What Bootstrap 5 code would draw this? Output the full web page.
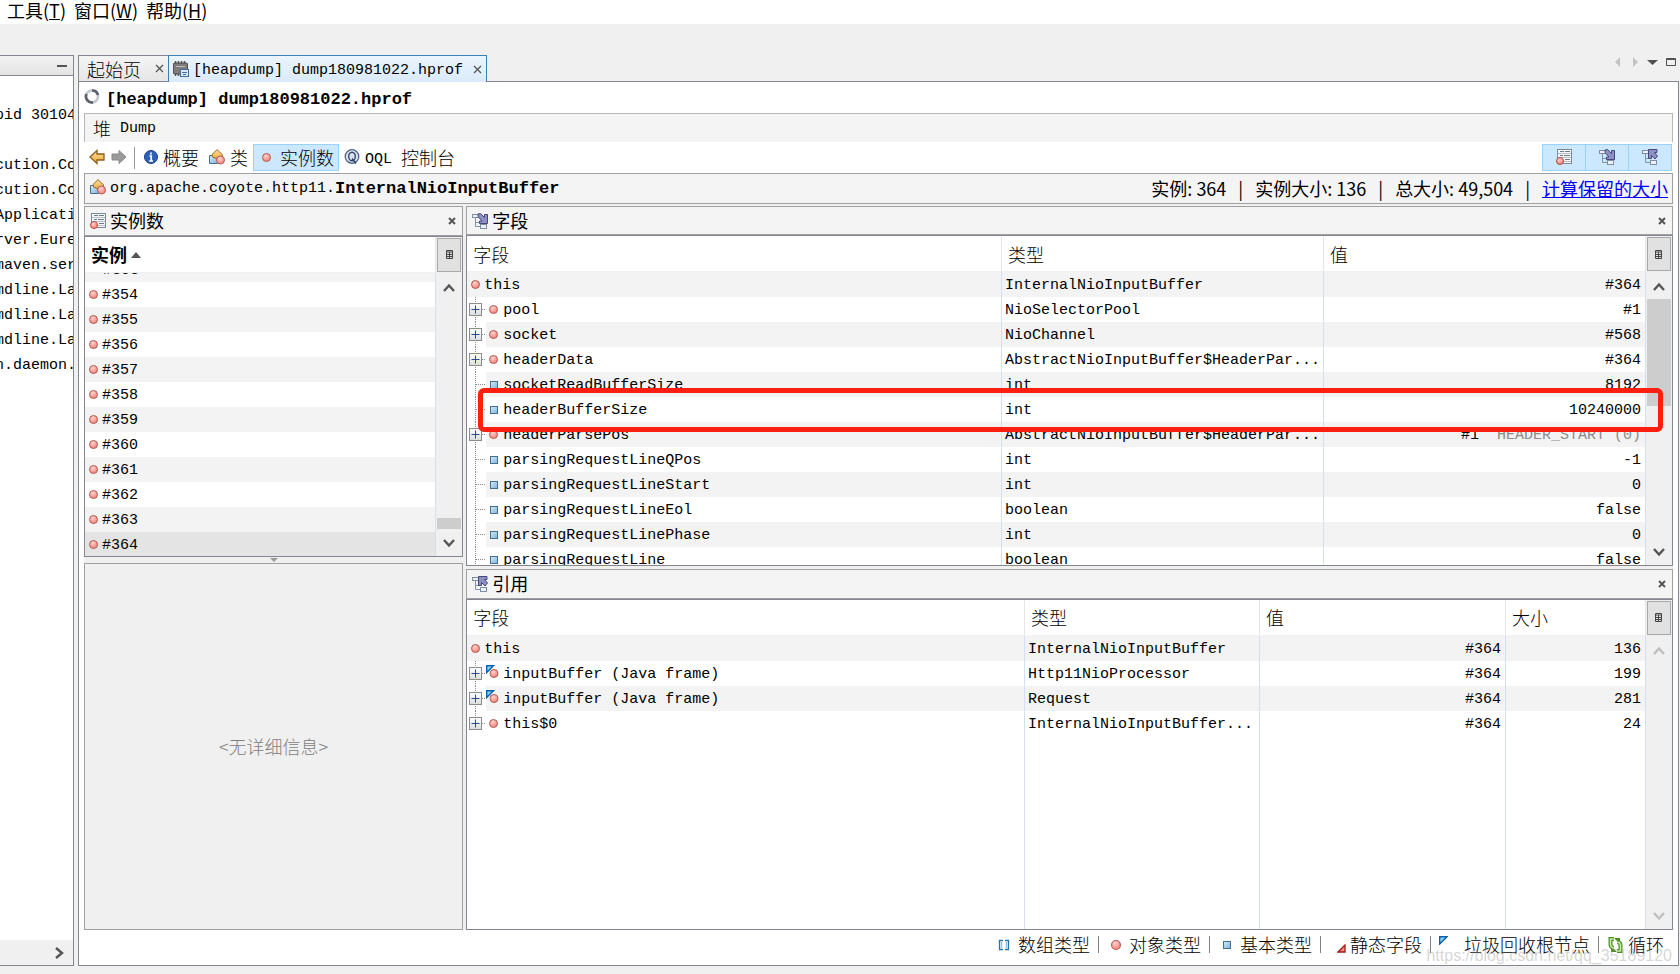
<!DOCTYPE html>
<html lang="zh-CN">
<head>
<meta charset="utf-8">
<meta name="viewport" content="width=device-width, initial-scale=1">
<title>VisualVM - dump180981022.hprof</title>
<link href="https://cdn.jsdelivr.net/npm/bootstrap@5.3.0/dist/css/bootstrap.min.css" rel="stylesheet">
<style>
:root { --line: #828790; --soft: #a0a0a0; --face: #f0f0f0; --stripe: #f3f3f3; --grid: #d5dff2; }
body { background: var(--face); color: #000; font: 15px/25px "Liberation Mono", "Noto Sans CJK SC", monospace; overflow: hidden; }
button { background: none; border: 0; padding: 0; color: inherit; font: inherit; line-height: 1; }
svg { display: block; flex: none; }
.ui { font-family: "Noto Sans CJK SC", sans-serif; font-size: 18px; }
.zh { font-family: "Noto Sans CJK SC", sans-serif; font-size: 18px; font-weight: 300; }
.menubar { height: 24px; gap: 8px; padding: 0 7px 4px; }
.menubar button { line-height: 20px; }
.workspace { padding: 31px 1px 8px 0; gap: 4px; }
.sidebar { width: 74px; border: 1px solid var(--line); border-left: 0; }
.sidebar-head { height: 20px; border-bottom: 1px solid var(--line); padding-right: 6px; background: linear-gradient(#f2f2f2, #e4e4e4); }
.sidebar-list { padding-top: 27px; margin-left: -5px; }
.sidebar-scroll { height: 25px; padding-right: 9px; background: var(--face); }
.tabs { height: 26px; }
.tab-item { border: 1px solid var(--line); border-width: 1px 0 0 1px; height: 26px; padding-left: 8px; background: linear-gradient(#f4f4f4, #e6e6e6); }
.tab-item.first { width: 90px; }
.tab-item.on { height: 27px; width: 319px; padding-left: 4px; border: 1px solid #3c7fb1; border-bottom: 0; background: linear-gradient(#ecf4fc, #d9eafc); position: relative; z-index: 1; }
.tab-close { margin-left: auto; padding-right: 4px; }
.tab-text { padding-top: 3px; }
.tab-tools { padding: 2px 3px 0 0; }
.doc { border: 1px solid var(--line); padding: 0 5px; }
.doc-title { height: 31px; padding-top: 6px; gap: 6px; }
.strong-mono { font-size: 17px; font-weight: 700; }
.crumb { height: 29px; border: 1px solid #b9b9b9; border-bottom: 0; background: #f4f4f4; padding: 0 8px; gap: 9px; }
.tools { height: 31px; padding: 0 1px 0 4px; }
.tools button { display: flex; align-items: center; height: 27px; border: 1px solid transparent; gap: 5px; padding-bottom: 1px; }
.tools .sep { width: 1px; height: 22px; margin: 0 4px 0 6px; background: #9a9a9a; }
.tools .lit { background: #cce8ff; border-color: #99d1ff; }
.view-btn { width: 44px; justify-content: center; }
.view-btn + .view-btn { margin-left: -1px; }
.info { height: 31px; border: 1px solid var(--soft); background: #f4f4f4; padding: 0 4px 0 5px; }
.info a { color: #00f; }
.info .ui { gap: 12px; }
.panes { background: var(--face); padding-top: 2px; gap: 3px; }
.pane-left { flex: 379 1 0; min-width: 0; }
.pane-right { flex: 1206 1 0; min-width: 0; gap: 3px; }
.box-top { flex: 352 1 0; min-height: 0; }
.box-detail { flex: 366 1 0; min-height: 0; border: 1px solid var(--soft); color: #808080; }
.box-fields { flex: 359 1 0; min-height: 0; }
.box-refs { flex: 361 1 0; min-height: 0; }
.splitter { height: 6px; }
.box-head { height: 30px; border: 1px solid var(--soft); background: #f4f4f4; padding: 0 6px 0 5px; gap: 4px; }
.box-body { border: 1px solid var(--line); background: #fff; min-height: 0; }
.data-table { table-layout: fixed; width: 100%; border-collapse: separate; border-spacing: 0; }
.data-table th { height: 36px; padding: 1px 0 0 6px; border-right: 1px solid #e5e5e5; border-bottom: 1px solid var(--face); font-weight: inherit; }
.data-table td { height: 25px; padding: 2px 0 0 3px; border-right: 1px solid var(--grid); white-space: nowrap; overflow: hidden; line-height: 23px; }
.data-table tr.g td { background: var(--stripe); }
.data-table tr.sel td { background: #e4e4e4; }
.data-table td:first-child { padding: 0; }
.data-table tr.rest td { height: auto; }
.data-table td.num { text-align: right; padding-right: 4px; }
.node { display: flex; align-items: center; height: 25px; padding: 2px 0 0 4px; gap: 4px; line-height: 25px; }
.node svg { margin-bottom: 2px; }
.node.cut { height: 9px; align-items: flex-end; overflow: hidden; padding: 0 0 0 18px; line-height: 23px; }
.kid { padding-left: 0; gap: 0; }
.kid svg:first-child { background: #fff; }
.kid svg + svg { margin-right: 1px; }
.gut { width: 19px; height: 25px; }
.scroller { width: 26px; background: var(--face); }
.cols-btn { height: 34px; margin: 1px 1px 1px 1px; border: 1px solid #a9a9a9; background: #e1e1e1; display: flex; align-items: center; justify-content: center; }
.step { height: 27px; display: flex; align-items: center; justify-content: center; padding-top: 3px; }
.step.dn { padding: 1px 0 0; }
.thumb { background: #cdcdcd; margin: 0 1px; }
.marker { position: absolute; top: 182px; left: 12px; right: 10px; height: 44px; border: 5px solid #ff1f10; border-radius: 6px; pointer-events: none; }
.legend { height: 35px; padding: 0 9px 6px; }
.legend i { width: 1px; height: 17px; background: #808080; }
.legend-item { display: flex; align-items: center; }
.watermark { position: absolute; right: 8px; bottom: 6px; font: 16px/25px "Liberation Sans", sans-serif; color: rgba(150, 150, 150, .4); }
</style>
</head>
<body class="vh-100 d-flex flex-column">

<svg width="0" height="0" class="position-absolute" aria-hidden="true">
  <defs>
    <radialGradient id="rg" cx=".4" cy=".3" r=".8"><stop offset="0" stop-color="#ffd2cc"/><stop offset="1" stop-color="#f0776c"/></radialGradient>
    <linearGradient id="bg" x2="1" y2="1"><stop offset="0" stop-color="#d4ecfa"/><stop offset="1" stop-color="#7fb3dc"/></linearGradient>
    <linearGradient id="og" x2="0" y2="1"><stop offset="0" stop-color="#fde3a0"/><stop offset="1" stop-color="#eea436"/></linearGradient>
    <linearGradient id="pg" x2="0" y2="1"><stop offset="0" stop-color="#fff"/><stop offset="1" stop-color="#dcdcdc"/></linearGradient>
  </defs>
  <symbol id="ball" viewBox="0.5 0.5 9 9"><circle cx="5" cy="5" r="4" fill="url(#rg)" stroke="#b05c55"/></symbol>
  <symbol id="prim" viewBox="0 0 10 10"><rect x="1.5" y="1.5" width="7" height="7" fill="url(#bg)" stroke="#44708f"/></symbol>
  <symbol id="plus" viewBox="0 0 19 25"><path d="M8.500 0V25M15 12.500H19" stroke="#888" stroke-dasharray="1 1"/><rect x="2.500" y="6.500" width="12" height="12" fill="url(#pg)" stroke="#8c8c8c"/><path d="M4.500 12.500H12.500M8.500 8.500V16.500" stroke="#2d4a94"/></symbol>
  <symbol id="plusend" viewBox="0 0 19 25"><path d="M8.500 0V7M15 12.500H19" stroke="#888" stroke-dasharray="1 1"/><rect x="2.500" y="6.500" width="12" height="12" fill="url(#pg)" stroke="#8c8c8c"/><path d="M4.500 12.500H12.500M8.500 8.500V16.500" stroke="#2d4a94"/></symbol>
  <symbol id="leaf" viewBox="0 0 19 25"><path d="M8.500 0V25M9 12.500H19" stroke="#888" stroke-dasharray="1 1"/></symbol>
  <symbol id="root" viewBox="0 0 9 9"><path d="M.7.7H8L.7 8Z" fill="#8fd0f5" stroke="#0a62ad" stroke-width="1.400"/></symbol>
  <symbol id="rootball" viewBox="0 0 16 25"><path d="M.7 4.700H7.500L.7 11.500Z" fill="#8fd0f5" stroke="#0a62ad" stroke-width="1.400"/><circle cx="8" cy="12.500" r="4" fill="url(#rg)" stroke="#b05c55"/></symbol>
  <symbol id="cls" viewBox="0 0 16 16"><path d="M.5 6.500H8.500V14.500H.5Z" fill="url(#bg)" stroke="#44708f"/><path d="M8 .7 13.800 6 10 10.500 3.500 8 3 5.500Z" fill="url(#og)" stroke="#9a6a22"/><circle cx="11.500" cy="11" r="4" fill="url(#rg)" stroke="#b05c55"/></symbol>
  <symbol id="inst" viewBox="0 0 16 16"><rect x="1.500" y=".5" width="14" height="14" fill="#f5f7f9" stroke="#7b8a99"/><path d="M2 4.500H15M2 8.500H15M2 12.500H15" stroke="#b4bfc9"/><path d="M4 2.500H8M9 2.500H14M4 6.500H7M8 6.500H14M9 10.500H14" stroke="#6e7b88"/><circle cx="4" cy="12" r="3.500" fill="url(#rg)" stroke="#b3483f"/></symbol>
  <symbol id="fld" viewBox="0 0 16 16"><path d="M3.500 5V13.500H8M3.500 9.500H8" fill="none" stroke="#8392a5"/><rect x=".5" y="1.500" width="7" height="3" fill="#eef2f6" stroke="#7d8da2"/><rect x="8.500" y="11.500" width="6" height="4" fill="#eef2f6" stroke="#7d8da2"/><rect x="8.500" y="8.500" width="6" height="3" fill="#dfe5ec" stroke="#7d8da2"/><path d="M6 1 8.500.5 12.500 4.500V1.500H15.500V10.500H7.500V8H10L6 3.500Z" fill="#8d90c0" stroke="#45487f"/></symbol>
  <symbol id="ref" viewBox="0 0 16 16"><path d="M3.500 5V13.500H8M3.500 9.500H8" fill="none" stroke="#8392a5"/><rect x=".5" y="1.500" width="7" height="3" fill="#eef2f6" stroke="#7d8da2"/><rect x="8.500" y="11.500" width="6" height="4" fill="#eef2f6" stroke="#7d8da2"/><path d="M6.500.5H15V3.500H12.500L15.500 7 13 10 9.500 6.500V9.500H6.500Z" fill="#8d90c0" stroke="#45487f"/></symbol>
  <symbol id="grid" viewBox="0 0 7 9"><path d="M.5 .5H6.500V8.500H.5ZM.5 2H6.500M.5 4.500H6.500M.5 6.500H6.500M3.500 2V8.500" fill="none" stroke="#444"/></symbol>
  <symbol id="up" viewBox="0 0 12 10"><path d="M1 8 6 2.500 11 8" fill="none" stroke="currentColor" stroke-width="2.400"/></symbol>
  <symbol id="down" viewBox="0 0 12 10"><path d="M1 2 6 7.500 11 2" fill="none" stroke="currentColor" stroke-width="2.400"/></symbol>
  <symbol id="x" viewBox="0 0 9 9"><path d="M1 1 8 8M8 1 1 8" stroke="#555" stroke-width="1.300"/></symbol>
  <symbol id="xb" viewBox="0 0 8 8"><path d="M1 1 7 7M7 1 1 7" stroke="#555" stroke-width="2"/></symbol>
</svg>

<nav class="menubar ui bg-white d-flex align-items-center" aria-label="菜单">
  <button type="button">工具(<u>T</u>)</button>
  <button type="button">窗口(<u>W</u>)</button>
  <button type="button">帮助(<u>H</u>)</button>
</nav>

<div class="workspace d-flex flex-grow-1">
  <aside class="sidebar bg-white d-flex flex-column flex-shrink-0 overflow-hidden">
    <div class="sidebar-head d-flex align-items-center justify-content-end"><button type="button" aria-label="最小化"><svg width="10" height="2"><rect width="10" height="2" fill="#555"/></svg></button></div>
    <div class="sidebar-list flex-grow-1 text-nowrap">
      <div>pid 30104</div><div>&nbsp;</div>
      <div>cution.Co</div><div>cution.Co</div><div>Applicati</div><div>rver.Eure</div><div>maven.ser</div><div>mdline.La</div><div>mdline.La</div><div>mdline.La</div><div>n.daemon.</div>
    </div>
    <div class="sidebar-scroll d-flex align-items-center justify-content-end"><button type="button" aria-label="向右滚动"><svg width="10" height="12"><path d="M2 1 8 6 2 11" fill="none" stroke="#555" stroke-width="2.400"/></svg></button></div>
  </aside>

  <main class="d-flex flex-column flex-grow-1" style="min-width:0">
    <div class="tabs d-flex">
      <div class="tab-item first d-flex align-items-center"><button type="button" class="zh">起始页</button><button type="button" class="tab-close" aria-label="关闭"><svg width="9" height="9"><use href="#x"/></svg></button></div>
      <div class="tab-item on d-flex align-items-center">
        <svg width="16" height="16" class="me-1" viewBox="0 0 16 16"><rect x=".5" y="2" width="14" height="11" rx="1" fill="#7d7d7d" stroke="#555"/><path d="M2.500 0V3M5.500 0V3M8.500 0V3M11.500 0V3M2.500 12V15M5.500 12V15" stroke="#555" stroke-width="1.500"/><path d="M3 5.500H12" stroke="#bbb"/><rect x="7.500" y="8.500" width="8" height="7" fill="#dbe8f7" stroke="#3e6da8"/><path d="M9 11.500H14M10 13.500H13" stroke="#3e6da8"/></svg>
        <button type="button" class="tab-text text-nowrap">[heapdump] dump180981022.hprof</button><button type="button" class="tab-close" aria-label="关闭"><svg width="9" height="9"><use href="#x"/></svg></button>
      </div>
      <div class="tab-tools d-flex ms-auto align-items-start">
        <svg width="62" height="12" viewBox="0 0 62 12" aria-hidden="true"><path d="M6 0V10L1 5ZM19 0V10L24 5Z" fill="#c3c3c3"/><path d="M33 3H44L38.500 8Z" fill="#505050"/><path d="M52.500 1.500H61.500V8.500H52.500ZM52 2.500H62" fill="none" stroke="#505050"/></svg>
      </div>
    </div>

    <section class="doc bg-white flex-grow-1 d-flex flex-column">
      <div class="doc-title d-flex align-items-center">
        <svg width="16" height="17" class="mb-2" viewBox="0 0 16 17"><circle cx="8" cy="8.500" r="6" fill="none" stroke="#c3c6cd" stroke-width="2.600"/><path d="M8 2.500A6 6 0 0 1 14 7" fill="none" stroke="#5a606d" stroke-width="2.600"/><path d="M2.500 6A6 6 0 0 0 9 14.400" fill="none" stroke="#5a606d" stroke-width="2.600"/></svg>
        <h1 class="strong-mono m-0 text-nowrap">[heapdump] dump180981022.hprof</h1>
      </div>
      <div class="crumb d-flex align-items-center"><span class="zh">堆</span><span>Dump</span></div>
      <div class="tools d-flex align-items-center">
        <button type="button" aria-label="后退"><svg width="16" height="16"><path d="M1 8 8 1.500V5H15V11H8V14.500Z" fill="url(#og)" stroke="#8f5f1c" stroke-width="1.300"/></svg></button>
        <button type="button" class="ms-1" aria-label="前进"><svg width="16" height="16"><path d="M15 8 8 1.500V5H1V11H8V14.500Z" fill="#9b9b9b" stroke="#8a8a8a"/></svg></button>
        <span class="sep"></span>
        <button type="button" class="ms-1 zh"><svg width="14" height="14" viewBox="0 0 14 14"><circle cx="7" cy="7" r="6.500" fill="#2f61b8" stroke="#1d3f86"/><path d="M7 2.500V4.500M5.500 6H7.200V11M5.200 11H9" fill="none" stroke="#fff" stroke-width="1.700"/></svg>概要</button>
        <button type="button" class="ms-2 me-1 zh"><svg width="16" height="16"><use href="#cls"/></svg>类</button>
        <button type="button" class="lit ps-2 pe-1 zh" aria-pressed="true"><svg width="9" height="9" class="me-1"><use href="#ball"/></svg>实例数</button>
        <button type="button" class="ms-1"><svg width="16" height="16" viewBox="0 0 16 16"><circle cx="8" cy="7.500" r="6.800" fill="#dbe3ef" stroke="#4f6488" stroke-width="1.300"/><ellipse cx="8" cy="7.500" rx="3.300" ry="4.200" fill="none" stroke="#33466c" stroke-width="1.400"/><path d="M8 9.500 12 14.500" stroke="#33466c" stroke-width="1.500"/></svg><span class="pt-1">OQL</span><span class="zh ms-1">控制台</span></button>
        <div class="d-flex ms-auto">
          <button type="button" class="lit view-btn" aria-label="实例数"><svg width="16" height="16"><use href="#inst"/></svg></button>
          <button type="button" class="lit view-btn" aria-label="字段"><svg width="16" height="16"><use href="#fld"/></svg></button>
          <button type="button" class="lit view-btn" aria-label="引用"><svg width="16" height="16"><use href="#ref"/></svg></button>
        </div>
      </div>
      <div class="info d-flex align-items-center text-nowrap">
        <svg width="16" height="16" class="me-1 mb-1"><use href="#cls"/></svg><span>org.apache.coyote.http11.</span><span class="strong-mono">InternalNioInputBuffer</span>
        <div class="ui d-flex ms-auto"><span>实例: 364</span><span>|</span><span>实例大小: 136</span><span>|</span><span>总大小: 49,504</span><span>|</span><a href="#">计算保留的大小</a></div>
      </div>

      <div class="panes d-flex flex-grow-1" style="min-height:0">
        <div class="pane-left d-flex flex-column">
          <section class="box-top d-flex flex-column">
            <div class="box-head d-flex align-items-center ui"><svg width="16" height="16"><use href="#inst"/></svg>实例数<button type="button" class="ms-auto" aria-label="关闭"><svg width="8" height="8"><use href="#xb"/></svg></button></div>
            <div class="box-body d-flex flex-grow-1">
              <div class="flex-grow-1 overflow-hidden">
                <table class="data-table">
                  <thead><tr><th scope="col"><div class="d-flex align-items-center zh fw-bold">实例<svg width="10" height="6" class="ms-1"><path d="M0 6 5 0 10 6Z" fill="#555"/></svg></div></th></tr></thead>
                  <tbody>
                    <tr class="g"><td style="height:9px"><div class="node cut">#353</div></td></tr>
                    <tr><td><div class="node"><svg width="9" height="9"><use href="#ball"/></svg>#354</div></td></tr>
                    <tr class="g"><td><div class="node"><svg width="9" height="9"><use href="#ball"/></svg>#355</div></td></tr>
                    <tr><td><div class="node"><svg width="9" height="9"><use href="#ball"/></svg>#356</div></td></tr>
                    <tr class="g"><td><div class="node"><svg width="9" height="9"><use href="#ball"/></svg>#357</div></td></tr>
                    <tr><td><div class="node"><svg width="9" height="9"><use href="#ball"/></svg>#358</div></td></tr>
                    <tr class="g"><td><div class="node"><svg width="9" height="9"><use href="#ball"/></svg>#359</div></td></tr>
                    <tr><td><div class="node"><svg width="9" height="9"><use href="#ball"/></svg>#360</div></td></tr>
                    <tr class="g"><td><div class="node"><svg width="9" height="9"><use href="#ball"/></svg>#361</div></td></tr>
                    <tr><td><div class="node"><svg width="9" height="9"><use href="#ball"/></svg>#362</div></td></tr>
                    <tr class="g"><td><div class="node"><svg width="9" height="9"><use href="#ball"/></svg>#363</div></td></tr>
                    <tr class="sel"><td><div class="node"><svg width="9" height="9"><use href="#ball"/></svg>#364</div></td></tr>
                  </tbody>
                </table>
              </div>
              <div class="scroller d-flex flex-column flex-shrink-0" style="color:#555">
                <button type="button" class="cols-btn" aria-label="列"><svg width="7" height="9"><use href="#grid"/></svg></button>
                <button type="button" class="step" aria-label="向上"><svg width="12" height="10"><use href="#up"/></svg></button>
                <div class="flex-grow-1 d-flex flex-column justify-content-end"><div class="thumb" style="height:11px"></div></div>
                <button type="button" class="step dn" aria-label="向下"><svg width="12" height="10"><use href="#down"/></svg></button>
              </div>
            </div>
          </section>
          <div class="splitter d-flex justify-content-center align-items-center"><svg width="8" height="4"><path d="M0 0H8L4 4Z" fill="#999"/></svg></div>
          <section class="box-detail d-flex align-items-center justify-content-center zh">&lt;无详细信息&gt;</section>
        </div>

        <div class="pane-right d-flex flex-column">
          <section class="box-fields d-flex flex-column position-relative">
            <div class="box-head d-flex align-items-center ui"><svg width="16" height="16"><use href="#fld"/></svg>字段<button type="button" class="ms-auto" aria-label="关闭"><svg width="8" height="8"><use href="#xb"/></svg></button></div>
            <div class="box-body d-flex flex-grow-1">
              <div class="flex-grow-1 overflow-hidden">
                <table class="data-table">
                  <colgroup><col><col style="width:322px"><col style="width:322px"></colgroup>
                  <thead><tr class="zh"><th scope="col">字段</th><th scope="col">类型</th><th scope="col">值</th></tr></thead>
                  <tbody>
                    <tr class="g"><td><div class="node"><svg width="9" height="9"><use href="#ball"/></svg>this</div></td><td>InternalNioInputBuffer</td><td class="num">#364</td></tr>
                    <tr><td><div class="node kid"><svg class="gut"><use href="#plus"/></svg><svg width="16" height="9" viewBox="0 0 16 9"><use href="#ball" x="3" width="9" height="9"/></svg>pool</div></td><td>NioSelectorPool</td><td class="num">#1</td></tr>
                    <tr class="g"><td><div class="node kid"><svg class="gut"><use href="#plus"/></svg><svg width="16" height="9" viewBox="0 0 16 9"><use href="#ball" x="3" width="9" height="9"/></svg>socket</div></td><td>NioChannel</td><td class="num">#568</td></tr>
                    <tr><td><div class="node kid"><svg class="gut"><use href="#plus"/></svg><svg width="16" height="9" viewBox="0 0 16 9"><use href="#ball" x="3" width="9" height="9"/></svg>headerData</div></td><td>AbstractNioInputBuffer$HeaderPar...</td><td class="num">#364</td></tr>
                    <tr class="g"><td><div class="node kid"><svg class="gut"><use href="#leaf"/></svg><svg width="16" height="10" viewBox="0 0 16 10"><use href="#prim" x="3" width="10" height="10"/></svg>socketReadBufferSize</div></td><td>int</td><td class="num">8192</td></tr>
                    <tr><td><div class="node kid"><svg class="gut"><use href="#leaf"/></svg><svg width="16" height="10" viewBox="0 0 16 10"><use href="#prim" x="3" width="10" height="10"/></svg>headerBufferSize</div></td><td>int</td><td class="num">10240000</td></tr>
                    <tr class="g"><td><div class="node kid"><svg class="gut"><use href="#plus"/></svg><svg width="16" height="9" viewBox="0 0 16 9"><use href="#ball" x="3" width="9" height="9"/></svg>headerParsePos</div></td><td>AbstractNioInputBuffer$HeaderPar...</td><td class="num">#1&nbsp; <span style="color:#8c8c8c">HEADER_START (0)</span></td></tr>
                    <tr><td><div class="node kid"><svg class="gut"><use href="#leaf"/></svg><svg width="16" height="10" viewBox="0 0 16 10"><use href="#prim" x="3" width="10" height="10"/></svg>parsingRequestLineQPos</div></td><td>int</td><td class="num">-1</td></tr>
                    <tr class="g"><td><div class="node kid"><svg class="gut"><use href="#leaf"/></svg><svg width="16" height="10" viewBox="0 0 16 10"><use href="#prim" x="3" width="10" height="10"/></svg>parsingRequestLineStart</div></td><td>int</td><td class="num">0</td></tr>
                    <tr><td><div class="node kid"><svg class="gut"><use href="#leaf"/></svg><svg width="16" height="10" viewBox="0 0 16 10"><use href="#prim" x="3" width="10" height="10"/></svg>parsingRequestLineEol</div></td><td>boolean</td><td class="num">false</td></tr>
                    <tr class="g"><td><div class="node kid"><svg class="gut"><use href="#leaf"/></svg><svg width="16" height="10" viewBox="0 0 16 10"><use href="#prim" x="3" width="10" height="10"/></svg>parsingRequestLinePhase</div></td><td>int</td><td class="num">0</td></tr>
                    <tr><td><div class="node kid"><svg class="gut"><use href="#leaf"/></svg><svg width="16" height="10" viewBox="0 0 16 10"><use href="#prim" x="3" width="10" height="10"/></svg>parsingRequestLine</div></td><td>boolean</td><td class="num">false</td></tr>
                  </tbody>
                </table>
              </div>
              <div class="scroller d-flex flex-column flex-shrink-0" style="color:#555">
                <button type="button" class="cols-btn" aria-label="列"><svg width="7" height="9"><use href="#grid"/></svg></button>
                <button type="button" class="step" aria-label="向上"><svg width="12" height="10"><use href="#up"/></svg></button>
                <div class="flex-grow-1"><div class="thumb" style="height:107px"></div></div>
                <button type="button" class="step dn" aria-label="向下"><svg width="12" height="10"><use href="#down"/></svg></button>
              </div>
            </div>
            <div class="marker"></div>
          </section>

          <section class="box-refs d-flex flex-column">
            <div class="box-head d-flex align-items-center ui"><svg width="16" height="16"><use href="#ref"/></svg>引用<button type="button" class="ms-auto" aria-label="关闭"><svg width="8" height="8"><use href="#xb"/></svg></button></div>
            <div class="box-body d-flex flex-grow-1">
              <div class="flex-grow-1 overflow-hidden">
                <table class="data-table h-100">
                  <colgroup><col><col style="width:235px"><col style="width:246px"><col style="width:140px"></colgroup>
                  <thead><tr class="zh"><th scope="col">字段</th><th scope="col">类型</th><th scope="col">值</th><th scope="col">大小</th></tr></thead>
                  <tbody>
                    <tr class="g"><td><div class="node"><svg width="9" height="9"><use href="#ball"/></svg>this</div></td><td>InternalNioInputBuffer</td><td class="num">#364</td><td class="num">136</td></tr>
                    <tr><td><div class="node kid"><svg class="gut"><use href="#plus"/></svg><svg width="16" height="25"><use href="#rootball"/></svg>inputBuffer (Java frame)</div></td><td>Http11NioProcessor</td><td class="num">#364</td><td class="num">199</td></tr>
                    <tr class="g"><td><div class="node kid"><svg class="gut"><use href="#plus"/></svg><svg width="16" height="25"><use href="#rootball"/></svg>inputBuffer (Java frame)</div></td><td>Request</td><td class="num">#364</td><td class="num">281</td></tr>
                    <tr><td><div class="node kid"><svg class="gut"><use href="#plusend"/></svg><svg width="16" height="9" viewBox="0 0 16 9"><use href="#ball" x="3" width="9" height="9"/></svg>this$0</div></td><td>InternalNioInputBuffer...</td><td class="num">#364</td><td class="num">24</td></tr>
                    <tr class="rest"><td></td><td></td><td></td><td></td></tr>
                  </tbody>
                </table>
              </div>
              <div class="scroller d-flex flex-column flex-shrink-0" style="color:#bfbfbf">
                <button type="button" class="cols-btn" aria-label="列"><svg width="7" height="9"><use href="#grid"/></svg></button>
                <button type="button" class="step" aria-label="向上"><svg width="12" height="10"><use href="#up"/></svg></button>
                <div class="flex-grow-1"></div>
                <button type="button" class="step dn" aria-label="向下"><svg width="12" height="10"><use href="#down"/></svg></button>
              </div>
            </div>
          </section>
        </div>
      </div>

      <footer class="legend zh d-flex align-items-center justify-content-end text-nowrap">
        <span class="legend-item"><svg width="12" height="12" class="me-2" viewBox="0 0 12 12"><path d="M5 1.500H1.500V10.500H5M7 1.500H10.500V10.500H7" fill="none" stroke="#2b74ad" stroke-width="1.300"/><path d="M3.500 3V9M8.500 3V9" stroke="#8fc3e8" stroke-width="1.500"/></svg>数组类型</span>
        <i class="ms-2 me-2"></i>
        <span class="legend-item ms-1"><svg width="10" height="10" class="me-2"><use href="#ball"/></svg>对象类型</span>
        <i class="ms-2 me-2"></i>
        <span class="legend-item ms-1"><svg width="10" height="10" class="me-2"><use href="#prim"/></svg>基本类型</span>
        <i class="ms-2 me-3"></i>
        <span class="legend-item"><svg width="9" height="9" class="me-1 mt-2"><path d="M8 1V8H1Z" fill="#f58b84" stroke="#a01a14" stroke-width="1.300"/></svg>静态字段</span>
        <i class="ms-2 me-2"></i>
        <span class="legend-item"><svg width="9" height="9" class="me-3 mb-2"><use href="#root"/></svg>垃圾回收根节点</span>
        <i class="ms-2 me-2"></i>
        <span class="legend-item"><svg width="17" height="16" class="me-1" viewBox="0 0 17 16"><path d="M7 2H3.500V7.500Q3.500 10 6.500 11M10 14H13.500V8.500Q13.500 5.500 10.500 5" fill="none" stroke="#4c8f22" stroke-width="4"/><path d="M4 9V15H10ZM13 7V1H7Z" fill="#4c8f22"/><path d="M7 2H3.500V7.500Q3.500 10 6.500 11M10 14H13.500V8.500Q13.500 5.500 10.500 5" fill="none" stroke="#c6eca0" stroke-width="1.600"/></svg>循环</span>
      </footer>
    </section>
  </main>
</div>
<div class="watermark">https://blog.csdn.net/qq_35189120</div>

<script src="https://cdn.jsdelivr.net/npm/bootstrap@5.3.0/dist/js/bootstrap.bundle.min.js"></script>
</body>
</html>
